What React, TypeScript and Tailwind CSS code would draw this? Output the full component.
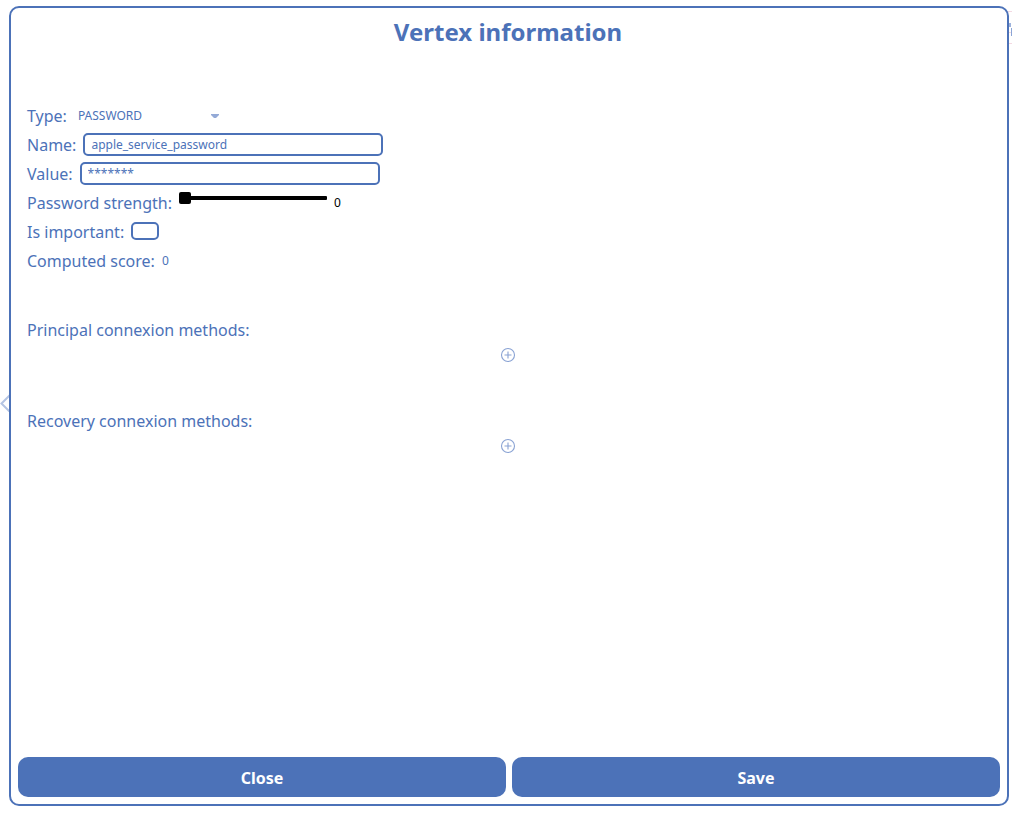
import { useState, type ReactNode } from "react";

function Row({ label, htmlFor, children }: { label: string; htmlFor: string; children: ReactNode }) {
  return (
    <div className="flex h-[29px] items-center gap-[7px]">
      <label htmlFor={htmlFor} className="leading-6">
        {label}
      </label>
      {children}
    </div>
  );
}

function Methods({ title }: { title: string }) {
  return (
    <section className="flex flex-col">
      <h2 className="leading-6">{title}</h2>
      <button type="button" aria-label={`Add to ${title}`} className="my-[5px] flex h-4 w-4 self-center">
        <svg viewBox="0 0 16 16" className="h-4 w-4" fill="none" stroke="#8aa3d4">
          <circle cx="8" cy="8" r="6.5" strokeWidth="1.1" />
          <path d="M8 4.5V11.5M4.5 8H11.5" strokeWidth="1.1" />
        </svg>
      </button>
    </section>
  );
}

const field =
  "h-[23px] w-[300px] rounded-[5px] border-2 border-[#4c72b8] bg-white px-1.5 text-xs text-[#4c72b8] outline-none";
const action = "h-10 flex-1 rounded-[10px] bg-[#4c72b8] pt-0.5 font-bold text-white";

export default function App() {
  const [type, setType] = useState("PASSWORD");
  const [name, setName] = useState("apple_service_password");
  const [value, setValue] = useState("*******");
  const [strength, setStrength] = useState(0);
  const [important, setImportant] = useState(false);

  return (
    <div className="relative flex min-h-screen overflow-hidden bg-white pt-1.5 pr-[3px] pb-[7px] pl-[9px] font-['Noto_Sans',sans-serif] text-base text-[#4c72b8]">
      <svg className="absolute top-[394px] left-0 h-[18px] w-3" viewBox="0 0 12 18" fill="none" stroke="#b4c4e3" strokeWidth="2">
        <path d="M10 1L1.5 9.5L10 18" />
      </svg>
      <svg className="absolute top-2 right-0 h-10 w-1" viewBox="0 0 4 40">
        <path d="M0 3.5H4M0 24.5H4M0 35.5H4" stroke="#f3d9e2" />
        <path d="M1 15H3V19H1Z" fill="#9db2dc" />
        <path d="M3.5 20V28" stroke="#8ba5d6" />
      </svg>

      <main role="dialog" aria-labelledby="title" className="relative flex flex-1 flex-col rounded-[10px] border-2 border-[#4c72b8] bg-white p-[7px]">
        <h1 id="title" className="pr-0.5 text-center text-2xl leading-[34px] font-bold">
          Vertex information
        </h1>

        <form className="mt-[52px] flex flex-1 flex-col pr-[11px] pl-[9px]" onSubmit={(e) => e.preventDefault()}>
          <Row label="Type:" htmlFor="type">
            <div className="grid w-[150px] items-center">
              <select
                id="type"
                value={type}
                onChange={(e) => setType(e.target.value)}
                className="col-start-1 row-start-1 w-full appearance-none bg-transparent px-1 text-xs outline-none"
              >
                <option>PASSWORD</option>
                <option>DEVICE</option>
                <option>ACCOUNT</option>
              </select>
              <svg className="pointer-events-none col-start-1 row-start-1 mr-[5px] h-1 w-2 justify-self-end" viewBox="0 0 8 4" fill="#94aad7">
                <path d="M0 0H8V1L5 4H3L0 1Z" />
              </svg>
            </div>
          </Row>
          <Row label="Name:" htmlFor="name">
            <input id="name" type="text" value={name} onChange={(e) => setName(e.target.value)} className={field} />
          </Row>
          <Row label="Value:" htmlFor="value">
            <input id="value" type="text" value={value} onChange={(e) => setValue(e.target.value)} className={field} />
          </Row>
          <Row label="Password strength:" htmlFor="strength">
            <input
              id="strength"
              type="range"
              min={0}
              max={100}
              value={strength}
              onChange={(e) => setStrength(Number(e.target.value))}
              className="mb-[10px] h-3 w-[148px] appearance-none bg-transparent [&::-webkit-slider-runnable-track]:h-1 [&::-webkit-slider-runnable-track]:rounded-[1px] [&::-webkit-slider-runnable-track]:bg-black [&::-webkit-slider-thumb]:-mt-1 [&::-webkit-slider-thumb]:h-3 [&::-webkit-slider-thumb]:w-3 [&::-webkit-slider-thumb]:appearance-none [&::-webkit-slider-thumb]:rounded-[2px] [&::-webkit-slider-thumb]:bg-black"
            />
            <output htmlFor="strength" className="text-xs text-black">
              {strength}
            </output>
          </Row>
          <Row label="Is important:" htmlFor="important">
            <input
              id="important"
              type="checkbox"
              checked={important}
              onChange={(e) => setImportant(e.target.checked)}
              className="mb-0.5 h-[18px] w-7 appearance-none rounded-[5px] border-2 border-[#4c72b8] checked:bg-[#4c72b8]"
            />
          </Row>
          <Row label="Computed score:" htmlFor="score">
            <output id="score" className="text-xs">
              0
            </output>
          </Row>

          <div className="mt-[43px] flex flex-col gap-[41px]">
            <Methods title="Principal connexion methods:" />
            <Methods title="Recovery connexion methods:" />
          </div>
        </form>

        <footer className="flex gap-1.5">
          <button type="button" className={action}>
            Close
          </button>
          <button type="button" className={action}>
            Save
          </button>
        </footer>
      </main>
    </div>
  );
}
